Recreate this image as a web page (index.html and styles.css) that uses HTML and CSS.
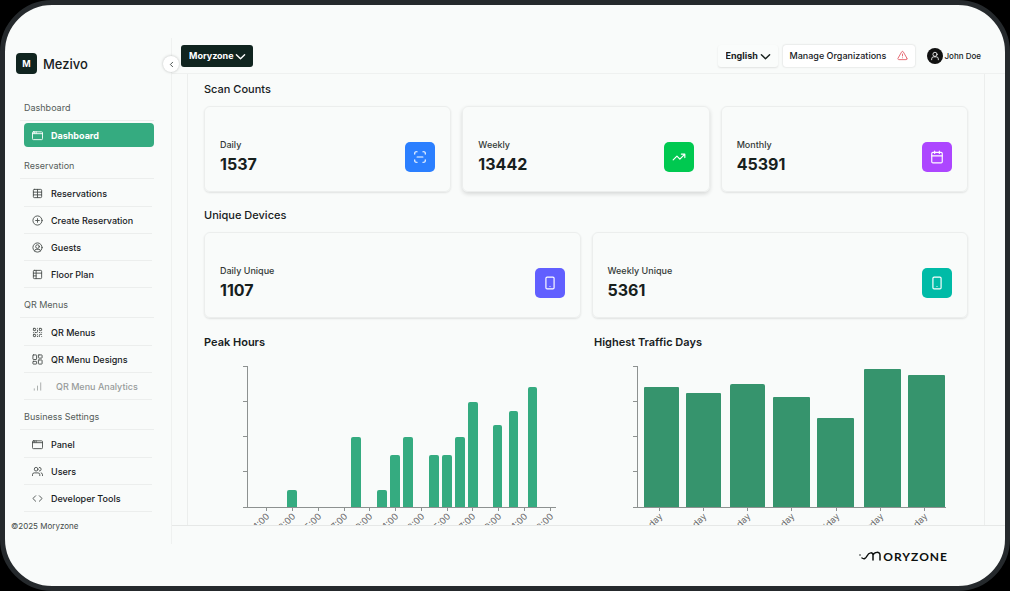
FILE: index.html
```html
<!DOCTYPE html>
<html lang="en">
<head>
  <meta charset="UTF-8" />
  <meta name="viewport" content="width=device-width, initial-scale=1.0" />
  <title>Mezivo Dashboard</title>
  <link rel="stylesheet" href="styles.css">
</head>
<body>
  <div class="device">
    <aside class="sidebar">
      <div class="brand">
        <span class="brand-icon">M</span>
        <span class="brand-name">Mezivo</span>
      </div>
      <button class="collapse" type="button" aria-label="Collapse sidebar">
        <svg class="icon" viewBox="0 0 24 24"><path d="m15 18-6-6 6-6"/></svg>
      </button>

      <nav>
        <h3>Dashboard</h3>
        <a class="active" href="#">
          <svg class="icon" viewBox="0 0 24 24"><rect x="1" y="4" width="22" height="17" rx="2"/><path d="M1 8h22M5 4v3M9 4v3"/></svg>
          Dashboard
        </a>

        <h3>Reservation</h3>
        <ul>
          <li><a href="#"><svg class="icon" viewBox="0 0 24 24"><rect x="3" y="3" width="18" height="18" rx="2"/><path d="M3 9h18M3 15h18M12 3v18"/></svg>Reservations</a></li>
          <li><a href="#"><svg class="icon" viewBox="0 0 24 24"><circle cx="12" cy="12" r="10"/><path d="M8 12h8M12 8v8"/></svg>Create Reservation</a></li>
          <li><a href="#"><svg class="icon" viewBox="0 0 24 24"><circle cx="12" cy="12" r="10"/><circle cx="12" cy="10" r="4"/><path d="M6 20v-1a3 3 0 0 1 3-3h6a3 3 0 0 1 3 3v1"/></svg>Guests</a></li>
          <li><a href="#"><svg class="icon" viewBox="0 0 24 24"><rect x="3" y="3" width="18" height="18" rx="2"/><path d="M3 9h18M9 3v18M9 15H3"/></svg>Floor Plan</a></li>
        </ul>

        <h3>QR Menus</h3>
        <ul>
          <li><a href="#"><svg class="icon" viewBox="0 0 24 24"><rect x="3" y="3" width="5" height="5" rx="1"/><rect x="16" y="3" width="5" height="5" rx="1"/><rect x="3" y="16" width="5" height="5" rx="1"/><path d="M21 16h-3a2 2 0 0 0-2 2v3M21 21v.01M12 7v3a2 2 0 0 1-2 2H7M3 12h.01M12 3h.01M12 16v.01M16 12h1M21 12v.01M12 21v-1"/></svg>QR Menus</a></li>
          <li><a href="#"><svg class="icon" viewBox="0 0 24 24"><rect x="2" y="2" width="8" height="10" rx="1"/><rect x="14" y="2" width="8" height="7" rx="1"/><rect x="14" y="13" width="8" height="9" rx="1"/><rect x="2" y="16" width="8" height="6" rx="1"/></svg>QR Menu Designs</a></li>
          <li><a class="disabled" href="#"><svg class="icon" viewBox="0 0 24 24"><path d="M5 20v-3M12 20V11M19 20V4"/></svg>QR Menu Analytics</a></li>
        </ul>

        <h3>Business Settings</h3>
        <ul>
          <li><a href="#"><svg class="icon" viewBox="0 0 24 24"><rect x="1" y="4" width="22" height="17" rx="2"/><path d="M1 8h22M5 4v3M9 4v3"/></svg>Panel</a></li>
          <li><a href="#"><svg class="icon" viewBox="0 0 24 24"><circle cx="9" cy="7" r="4"/><path d="M1 21v-2a4 4 0 0 1 4-4h8a4 4 0 0 1 4 4v2M23 21v-2a4 4 0 0 0-3-4M16 3a4 4 0 0 1 0 8"/></svg>Users</a></li>
          <li><a href="#"><svg class="icon" viewBox="0 0 24 24"><path d="m16 18 6-6-6-6M8 6l-6 6 6 6"/></svg>Developer Tools</a></li>
        </ul>
      </nav>
      <p class="copyright">©2025 Moryzone</p>
    </aside>

    <div class="page">
      <header class="topbar">
        <div class="picker picker-dark">
          <select aria-label="Organization"><option>Moryzone</option></select>
          <svg class="icon" viewBox="0 0 24 24"><path d="m3 8 9 9 9-9"/></svg>
        </div>
        <div class="picker picker-light">
          <select aria-label="Language"><option>English</option></select>
          <svg class="icon" viewBox="0 0 24 24"><path d="m3 8 9 9 9-9"/></svg>
        </div>
        <button class="manage" type="button">
          Manage Organizations
          <svg class="icon" viewBox="0 0 24 24"><path d="m21.700 18-8-14a2 2 0 0 0-3.500 0l-8 14A2 2 0 0 0 4 21h16a2 2 0 0 0 1.700-3M12 9v4M12 17h.01"/></svg>
        </button>
        <a class="user" href="#">
          <span class="avatar"><svg class="icon" viewBox="0 0 24 24"><circle cx="12" cy="8" r="5"/><path d="M4 21v-2a5 5 0 0 1 5-5h6a5 5 0 0 1 5 5v2"/></svg></span>
          John Doe
        </a>
      </header>

      <main class="content">
        <div class="panel">
          <h2>Scan Counts</h2>
          <div class="cards three">
            <div class="card">
              <div><p>Daily</p><strong>1537</strong></div>
              <span class="badge blue"><svg class="icon" viewBox="0 0 24 24"><path d="M3 7V5a2 2 0 0 1 2-2h2M17 3h2a2 2 0 0 1 2 2v2M21 17v2a2 2 0 0 1-2 2h-2M7 21H5a2 2 0 0 1-2-2v-2M7 12h10"/></svg></span>
            </div>
            <div class="card raised">
              <div><p>Weekly</p><strong>13442</strong></div>
              <span class="badge green"><svg class="icon" viewBox="0 0 24 24"><path d="M16 7h6v6M22 7l-8.500 8.500-5-5L2 17"/></svg></span>
            </div>
            <div class="card">
              <div><p>Monthly</p><strong>45391</strong></div>
              <span class="badge purple"><svg class="icon" viewBox="0 0 24 24"><rect x="3" y="4" width="18" height="18" rx="2"/><path d="M8 2v4M16 2v4M3 10h18"/></svg></span>
            </div>
          </div>

          <h2>Unique Devices</h2>
          <div class="cards two">
            <div class="card">
              <div><p>Daily Unique</p><strong>1107</strong></div>
              <span class="badge indigo"><svg class="icon" viewBox="0 0 24 24"><rect x="5" y="2" width="14" height="20" rx="2"/><path d="M12 18h.01"/></svg></span>
            </div>
            <div class="card">
              <div><p>Weekly Unique</p><strong>5361</strong></div>
              <span class="badge teal"><svg class="icon" viewBox="0 0 24 24"><rect x="5" y="2" width="14" height="20" rx="2"/><path d="M12 18h.01"/></svg></span>
            </div>
          </div>

          <div class="charts">
            <section>
              <h2>Peak Hours</h2>
              <svg class="chart" viewBox="0 0 374 190">
                <path class="axis" d="M39 11h4v141h-4M39 46h4M39 81h4M39 116h4M43 152h309M62 152v4M88 152v4M114 152v4M140 152v4M165 152v4M191 152v4M217 152v4M243 152v4M268 152v4M294 152v4M320 152v4M346 152v4"/>
                <g class="hours">
                  <path d="M83 152v-15q0-2 2-2h6q2 0 2 2v15z"/>
                  <path d="M147 152v-68q0-2 2-2h6q2 0 2 2v68z"/>
                  <path d="M173 152v-15q0-2 2-2h6q2 0 2 2v15z"/>
                  <path d="M186 152v-50q0-2 2-2h6q2 0 2 2v50z"/>
                  <path d="M199 152v-68q0-2 2-2h6q2 0 2 2v68z"/>
                  <path d="M225 152v-50q0-2 2-2h6q2 0 2 2v50z"/>
                  <path d="M238 152v-50q0-2 2-2h6q2 0 2 2v50z"/>
                  <path d="M251 152v-68q0-2 2-2h6q2 0 2 2v68z"/>
                  <path d="M264 152v-103q0-2 2-2h6q2 0 2 2v103z"/>
                  <path d="M289 152v-80q0-2 2-2h5q2 0 2 2v80z"/>
                  <path d="M305 152v-94q0-2 2-2h5q2 0 2 2v94z"/>
                  <path d="M324 152v-118q0-2 2-2h5q2 0 2 2v118z"/>
                </g>
                <g class="labels">
                  <text transform="translate(66 162) rotate(-45)">01:00</text>
                  <text transform="translate(92 162) rotate(-45)">03:00</text>
                  <text transform="translate(118 162) rotate(-45)">05:00</text>
                  <text transform="translate(144 162) rotate(-45)">07:00</text>
                  <text transform="translate(169 162) rotate(-45)">09:00</text>
                  <text transform="translate(195 162) rotate(-45)">11:00</text>
                  <text transform="translate(221 162) rotate(-45)">13:00</text>
                  <text transform="translate(247 162) rotate(-45)">15:00</text>
                  <text transform="translate(272 162) rotate(-45)">17:00</text>
                  <text transform="translate(298 162) rotate(-45)">19:00</text>
                  <text transform="translate(324 162) rotate(-45)">21:00</text>
                  <text transform="translate(350 162) rotate(-45)">23:00</text>
                </g>
              </svg>
            </section>
            <section>
              <h2>Highest Traffic Days</h2>
              <svg class="chart" viewBox="0 0 374 190">
                <path class="axis" d="M39 11h4v141h-4M39 46h4M39 81h4M39 116h4M43 152h309M65 152v4M109 152v4M153 152v4M197 152v4M242 152v4M286 152v4M330 152v4"/>
                <g class="days">
                  <path d="M50 152v-119q0-1 1-1h33q1 0 1 1v119z"/>
                  <path d="M92 152v-113q0-1 1-1h33q1 0 1 1v113z"/>
                  <path d="M136 152v-121q0-2 2-2h31q2 0 2 2v121z"/>
                  <path d="M179 152v-109q0-1 1-1h35q1 0 1 1v109z"/>
                  <path d="M223 152v-88q0-1 1-1h35q1 0 1 1v88z"/>
                  <path d="M270 152v-137q0-1 1-1h35q1 0 1 1v137z"/>
                  <path d="M314 152v-131q0-1 1-1h35q1 0 1 1v131z"/>
                </g>
                <g class="labels">
                  <text transform="translate(69 162) rotate(-45)">Monday</text>
                  <text transform="translate(113 162) rotate(-45)">Tuesday</text>
                  <text transform="translate(157 162) rotate(-45)">Wednesday</text>
                  <text transform="translate(201 162) rotate(-45)">Thursday</text>
                  <text transform="translate(246 162) rotate(-45)">Friday</text>
                  <text transform="translate(290 162) rotate(-45)">Saturday</text>
                  <text transform="translate(334 162) rotate(-45)">Sunday</text>
                </g>
              </svg>
            </section>
          </div>
        </div>
      </main>

      <footer>
        <a class="wordmark" href="#" aria-label="Moryzone">
          <svg viewBox="0 0 24 10"><path d="M1 4h.01M3 7q3 2 5-2c2-4 6-4 6-1v5M14 4c1-3 7-4 7 0v5"/></svg>
          <span>ORYZONE</span>
        </a>
      </footer>
    </div>
  </div>
</body>
</html>
```
FILE: styles.css
```css
* { box-sizing: border-box; margin: 0; padding: 0; }
body {
  font-family: Inter, "Liberation Sans", sans-serif;
  background: #000;
  color: #17201d;
  font-size: 9px;
}
a {
  color: inherit;
  text-decoration: none;
}
ul { list-style: none; }
button, select {
  font: inherit;
  color: inherit;
  border: none;
  cursor: pointer;
}
.icon {
  width: 11px;
  height: 11px;
  flex: none;
  fill: none;
  stroke: currentColor;
  stroke-width: 2;
  stroke-linecap: round;
  stroke-linejoin: round;
}
.device {
  display: flex;
  height: 100vh;
  padding-top: 33px;
  background: #f9fbfa;
  border: 5px solid #25292c;
  border-radius: 52px;
  overflow: hidden;
}

/* sidebar */
.sidebar {
  position: relative;
  flex: none;
  width: 167px;
  margin-bottom: 42px;
  padding: 15px 17px 0 15px;
  border-right: 1px solid #eff1f0;
}
.brand {
  display: flex;
  align-items: center;
  gap: 6px;
  margin: 0 -4px 17px;
}
.brand-icon {
  width: 21px;
  height: 21px;
  border-radius: 4px;
  background: #10241f;
  color: #fff;
  font-weight: 700;
  line-height: 21px;
  text-align: center;
}
.brand-name {
  font-size: 13px;
  font-weight: 500;
}
.collapse {
  position: absolute;
  top: 18px;
  right: -8px;
  display: flex;
  align-items: center;
  justify-content: center;
  width: 16px;
  height: 16px;
  border-radius: 50%;
  background: #fff;
  box-shadow: 0 0 3px rgba(0,0,0,0.25);
}
.collapse .icon {
  width: 9px;
  height: 9px;
}
.sidebar h3 {
  height: 30px;
  padding: 5px 4px 0;
  border-bottom: 1px solid #eceeed;
  color: #555b59;
  font-size: 9px;
  font-weight: 400;
  line-height: 24px;
}
.sidebar ul {
  padding: 1px 2px 0 4px;
}
.sidebar li {
  height: 27px;
  border-bottom: 1px solid #eceeed;
}
.sidebar li a, .active {
  display: flex;
  align-items: center;
  gap: 8px;
  height: 26px;
  padding-left: 8px;
  font-weight: 500;
}
.sidebar li .icon {
  color: #4a504e;
}
.sidebar .active {
  height: 24px;
  margin: 2px 0 2px 4px;
  border-radius: 4px;
  background: #35ab80;
  color: #fff;
  font-weight: 700;
}
.sidebar .disabled {
  gap: 13px;
  color: #989c9a;
}
.sidebar .disabled .icon {
  color: #a4a8a6;
}
.copyright {
  margin: 7px -9px 0;
  font-size: 8px;
  line-height: 14px;
  color: #444a48;
}

/* top bar */
.page {
  display: flex;
  flex: 1;
  flex-direction: column;
  min-width: 0;
}
.topbar {
  display: flex;
  align-items: center;
  height: 36px;
  padding: 0 24px 0 9px;
  border-bottom: 1px solid #eff1f0;
}
.picker {
  position: relative;
}
.picker select {
  appearance: none;
  height: 22px;
  padding: 0 18px 0 8px;
  border-radius: 3px;
  font-weight: 700;
}
.picker .icon {
  position: absolute;
  top: 6px;
  right: 7px;
  stroke-width: 3;
  pointer-events: none;
}
.picker-dark {
  color: #fff;
}
.picker-dark select {
  width: 72px;
  background: #10241f;
}
.picker-light {
  margin-left: auto;
}
.picker-light select {
  width: 60px;
  background: #fafcfb;
  box-shadow: 0 1px 2px rgba(0,0,0,0.1);
}
.manage {
  display: flex;
  align-items: center;
  justify-content: space-between;
  width: 132px;
  height: 22px;
  margin: 0 12px 0 5px;
  padding: 0 7px;
  border-radius: 3px;
  background: #fff;
  box-shadow: 0 0 2px rgba(0,0,0,0.2);
  font-weight: 500;
}
.manage .icon {
  color: #e2606a;
}
.user {
  display: flex;
  align-items: center;
  gap: 2px;
  font-size: 8px;
  font-weight: 500;
}
.avatar {
  display: flex;
  align-items: center;
  justify-content: center;
  width: 16px;
  height: 16px;
  border-radius: 50%;
  background: #111;
  color: #fff;
}
.avatar .icon {
  width: 10px;
  height: 10px;
}

/* content */
.content {
  flex: 1;
  min-height: 0;
  padding: 0 20px 0 15px;
  overflow: hidden;
}
.panel {
  padding: 7px 16px;
  border: 1px solid #eceeed;
  border-width: 0 1px;
}
h2 {
  font-size: 11px;
  font-weight: 500;
  line-height: 16px;
}
.cards {
  display: grid;
  gap: 11px;
  margin: 9px 0 15px;
}
.three { grid-template-columns: repeat(3, 1fr); }
.two { grid-template-columns: repeat(2, 1fr); }
.card {
  display: flex;
  align-items: center;
  justify-content: space-between;
  height: 86px;
  padding: 16px 15px 0;
  border: 1px solid #eceeed;
  border-radius: 6px;
  box-shadow: 0 1px 2px rgba(0,0,0,0.1);
}
.raised {
  box-shadow: 0 2px 4px rgba(0,0,0,0.14);
}
.card p {
  font-weight: 500;
  line-height: 14px;
  color: #333937;
}
.card strong {
  display: block;
  font-size: 16px;
  font-weight: 700;
  line-height: 24px;
}
.badge {
  display: flex;
  align-items: center;
  justify-content: center;
  width: 30px;
  height: 30px;
  border-radius: 5px;
  color: #fff;
}
.badge .icon {
  width: 14px;
  height: 14px;
}
.blue { background: #2b7fff; }
.green { background: #00c950; }
.purple { background: #ad46ff; }
.indigo { background: #615fff; }
.teal { background: #00bba7; }

/* charts */
.charts {
  display: grid;
  grid-template-columns: repeat(2, 1fr);
  gap: 16px;
}
.charts h2 {
  font-weight: 600;
  line-height: 18px;
}
.chart {
  display: block;
  width: 100%;
  margin-top: 4px;
}
.axis {
  fill: none;
  stroke: #8d9190;
  shape-rendering: crispEdges;
}
.hours { fill: #35ab80; }
.days { fill: #36946d; }
.labels {
  fill: #666;
  font-size: 9px;
  text-anchor: end;
}

footer {
  display: flex;
  justify-content: flex-end;
  height: 61px;
  padding: 23px 57px 0 0;
  border-top: 1px solid #e6e8e7;
}
.wordmark {
  display: flex;
  align-items: center;
  height: 14px;
  color: #0c0f0e;
  font-family: Lato, "Liberation Sans", sans-serif;
  font-size: 12px;
  font-weight: 700;
}
.wordmark span {
  letter-spacing: 1px;
}
.wordmark svg {
  width: 24px;
  height: 10px;
  fill: none;
  stroke: currentColor;
  stroke-width: 1.5;
  stroke-linecap: round;
}
```
